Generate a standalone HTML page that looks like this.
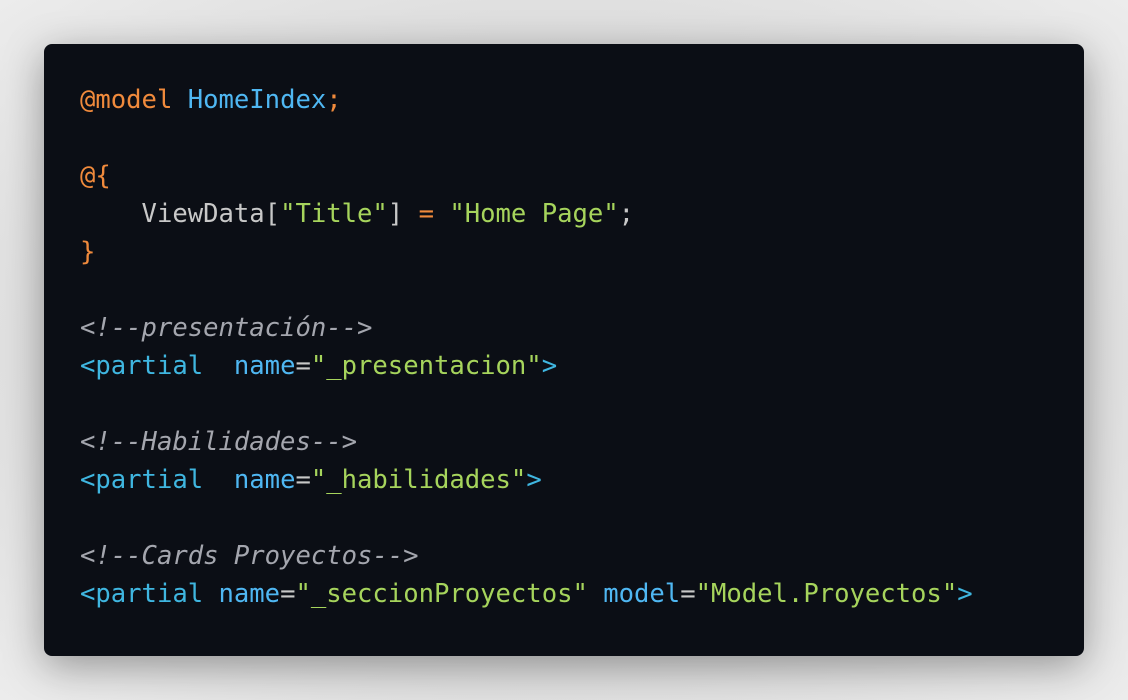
<!DOCTYPE html>
<html><head><meta charset="utf-8"><style>
html,body{margin:0;padding:0}
body{width:1128px;height:700px;background:radial-gradient(ellipse at 50% 50%,#c4c4c4 0%,#dcdcdc 60%,#ececec 100%);position:relative;overflow:hidden}
.card{position:absolute;left:44px;top:44px;width:1040px;height:612px;background:#0b0e15;border-radius:8px;box-shadow:0 10px 40px rgba(0,0,0,.35)}
pre{margin:0;position:absolute;left:36px;top:37px;font-family:"DejaVu Sans Mono","Liberation Mono",monospace;font-size:25.6px;line-height:38px;color:#c8c8c8;letter-spacing:-0.02px}
.o{color:#f08a3c}.b{color:#4fb7f2}.g{color:#a6d45c}.c{color:#a4a6ae;font-style:italic}.t{color:#3fb6e0}
</style></head><body><div class="card"><pre><span class="o">@model</span> <span class="b">HomeIndex</span><span class="o">;</span>

<span class="o">@{</span>
    ViewData[<span class="g">"Title"</span>] <span class="o">=</span> <span class="g">"Home Page"</span>;
<span class="o">}</span>

<span class="c">&lt;!--presentación--&gt;</span>
<span class="t">&lt;partial</span>  <span class="b">name</span>=<span class="g">"_presentacion"</span><span class="t">&gt;</span>

<span class="c">&lt;!--Habilidades--&gt;</span>
<span class="t">&lt;partial</span>  <span class="b">name</span>=<span class="g">"_habilidades"</span><span class="t">&gt;</span>

<span class="c">&lt;!--Cards Proyectos--&gt;</span>
<span class="t">&lt;partial</span> <span class="b">name</span>=<span class="g">"_seccionProyectos"</span> <span class="b">model</span>=<span class="g">"Model.Proyectos"</span><span class="t">&gt;</span></pre></div></body></html>
